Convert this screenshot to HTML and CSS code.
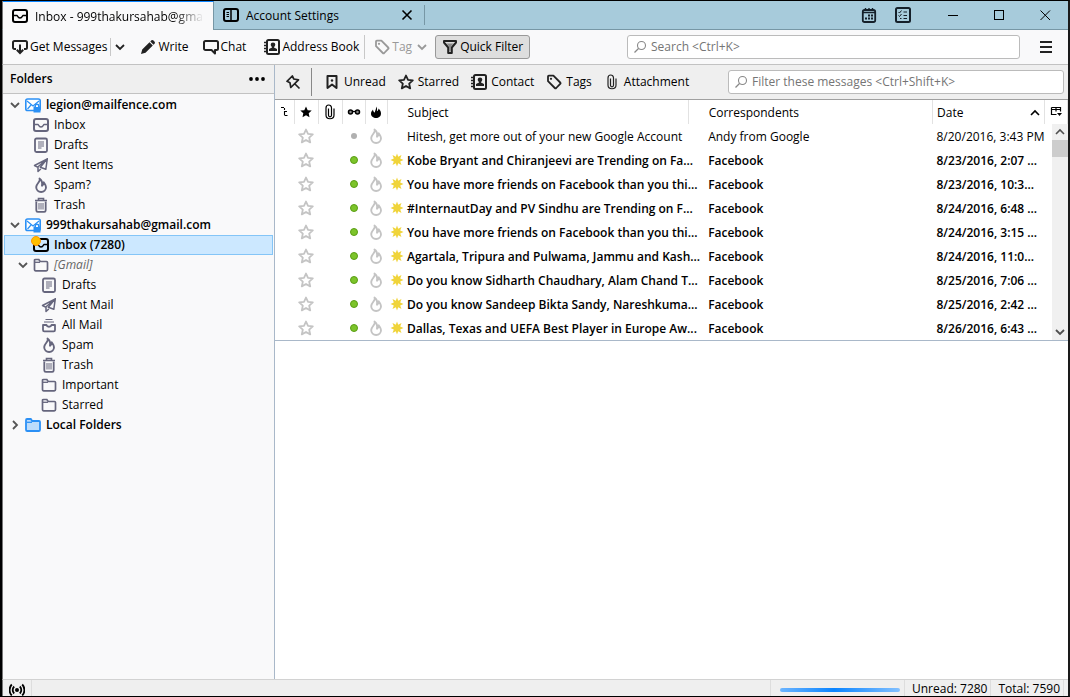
FILE: index.html
```html
<!DOCTYPE html>
<html lang="en">
  <head>
    <meta charset="UTF-8" />
    <meta name="viewport" content="width=device-width, initial-scale=1.0" />
    <title>Inbox - 999thakursahab@gmail.com</title>
    <link rel="stylesheet" href="styles.css">
  </head>
  <body>
    <!-- icon sprite -->
    <svg class="sprite" aria-hidden="true">
      <symbol id="i-inbox" viewBox="0 0 16 16"><rect x="1" y="2" width="14" height="12" rx="2" fill="none" stroke="currentColor" stroke-width="2"/><path d="M2 7.500h3c.6 0 .6 2.500 3 2.500s2.400-2.500 3-2.500h3" fill="none" stroke="currentColor" stroke-width="1.300"/></symbol>
      <symbol id="i-page" viewBox="0 0 16 16"><rect x="2" y="1.500" width="12" height="13.500" rx="1.500" fill="none" stroke="currentColor" stroke-width="1.800"/><path d="M5 5h6M5 7h6M5 9h6M5 11h3.500" stroke="currentColor"/></symbol>
      <symbol id="i-sent" viewBox="0 0 16 16"><path d="M14.300 1.800L1.500 8.500l3 1.700L14.300 1.800l-1.500 10.500-5.500-2zM5 10v4.500l2.800-2.500" fill="none" stroke="currentColor" stroke-width="1.500" stroke-linejoin="round"/></symbol>
      <symbol id="i-flame" viewBox="0 0 16 16"><path d="M6.500 1.500c2 2.500-3.300 5-3.300 8.500 0 3 2.200 5 4.900 5 2.800 0 4.900-2 4.900-4.700 0-2.300-1.500-3.300-2.300-5-.2 1.800-.6 2.700-1.700 3.500C9.500 5.500 9 3 6.500 1.500z" fill="none" stroke="currentColor" stroke-width="1.900" stroke-linejoin="round"/></symbol>
      <symbol id="i-flame-solid" viewBox="0 0 16 16"><path d="M8 2.500c1.200 1.500 1.300 3 .8 4.800.9-.3 1.500-1.300 1.900-2.800 1.300 1.500 2.300 3 2.300 5 0 2.800-2.200 4.500-4.900 4.500S3 12.300 3 9.700c0-2 1.200-3 2-4.200.2 1.800.8 2.800 1.800 3C7 6.500 8.500 5 8 2.500z" fill="currentColor"/></symbol>
      <symbol id="i-trash" viewBox="0 0 16 16"><path d="M3.300 4.500v8.700c0 1 .6 1.600 1.500 1.600h6.400c.9 0 1.500-.6 1.500-1.600V4.500" fill="none" stroke="currentColor" stroke-width="1.800"/><path d="M2 3.500h12M5.500 3V1.500h5V3" fill="none" stroke="currentColor" stroke-width="1.600"/><path d="M6 6v6.500M8 6v6.500M10 6v6.500" stroke="currentColor"/></symbol>
      <symbol id="i-archive" viewBox="0 0 16 16"><path d="M4.500 2.500h7M3 5h10" stroke="currentColor" stroke-width="1.200"/><path d="M2 8v5c0 .8.500 1.300 1.300 1.300h9.400c.8 0 1.300-.5 1.300-1.300V8h-3.500c-.5 2.300-4.500 2.300-5 0z" fill="none" stroke="currentColor" stroke-width="1.800" stroke-linejoin="round"/></symbol>
      <symbol id="i-folder" viewBox="0 0 16 16"><path d="M1.500 12.500v-9c0-.7.400-1 1-1h3.300l1.400 2h6.300c.7 0 1 .4 1 1v7c0 .8-.4 1.300-1.200 1.300H2.700c-.8 0-1.200-.5-1.200-1.300z" fill="none" stroke="currentColor" stroke-width="1.700"/><path d="M2 5.300h5" stroke="currentColor" stroke-width="1.300"/></symbol>
      <symbol id="i-folder-local" viewBox="0 0 16 16"><path d="M1 12.700v-9.500c0-.7.400-1.200 1-1.200h3.800l1.400 2H14c.6 0 1 .4 1 1v7.700c0 .8-.4 1.300-1.200 1.300H2.200c-.8 0-1.200-.5-1.200-1.300z" fill="#bddcfb" stroke="#2b90f5" stroke-width="1.800"/><path d="M2 5.300h5" stroke="#2b90f5" stroke-width="1.300"/></symbol>
      <symbol id="i-account" viewBox="0 0 16 16"><rect x=".8" y="2" width="14.400" height="11.500" rx="1.800" fill="#fff" stroke="#2b90f5" stroke-width="1.600"/><path d="M2 4l6 5 6-5M2.500 12l3.500-4" fill="none" stroke="#2b90f5" stroke-width="1.200"/><rect x="8.500" y="9.500" width="7" height="6" fill="#2b90f5"/><path d="M10.300 10V8.700c0-2 3.400-2 3.400 0V10" fill="#fff" stroke="#2b90f5" stroke-width="1.400"/></symbol>
      <symbol id="i-settings-tab" viewBox="0 0 16 16"><rect x="1" y="2" width="14" height="12" rx="2" fill="none" stroke="currentColor" stroke-width="2"/><path d="M8 2v12" stroke="currentColor" stroke-width="1.500"/><path d="M3.500 5.500H6M3.500 7.500H6M3.500 9.500H6" stroke="currentColor"/></symbol>
      <symbol id="i-close" viewBox="0 0 16 16"><path d="M3.500 3.500l9 9M12.500 3.500l-9 9" stroke="currentColor" stroke-width="1.600"/></symbol>
      <symbol id="i-calendar" viewBox="0 0 16 16"><rect x="1.800" y="3" width="12.400" height="12" rx="1.800" fill="none" stroke="currentColor" stroke-width="1.800"/><path d="M2 5.500h12" stroke="currentColor" stroke-width="1.500"/><path d="M4.500 1v3M8 1v3M11.500 1v3" stroke="currentColor" stroke-width="1.400"/><path d="M7 8.500h5M4 11.500h8" stroke="currentColor" stroke-width="2" stroke-dasharray="2 1"/></symbol>
      <symbol id="i-tasks" viewBox="0 0 16 16"><rect x="1" y="1" width="14" height="14" rx="1.500" fill="none" stroke="currentColor" stroke-width="2"/><path d="M3.500 5l1 1L6.500 3.500M3.500 8.500l1 1 2-2.500M8.500 5H12M8.500 8.500H12M8.500 11.500H12M5 11.500h1.500" fill="none" stroke="currentColor"/></symbol>
      <symbol id="i-minimize" viewBox="0 0 16 16"><path d="M3 8.500h10" stroke="currentColor"/></symbol>
      <symbol id="i-maximize" viewBox="0 0 16 16"><rect x="3.500" y="3.500" width="9" height="9" fill="none" stroke="currentColor"/></symbol>
      <symbol id="i-exit" viewBox="0 0 16 16"><path d="M3.500 3.500l9.500 9.500M13 3.500L3.500 13" stroke="currentColor"/></symbol>
      <symbol id="i-get" viewBox="0 0 16 16"><path d="M4 10H2.500C1.600 10 1 9.400 1 8.500v-5C1 2.600 1.600 2 2.500 2h11c.9 0 1.500.6 1.500 1.500v5c0 .9-.6 1.500-1.500 1.500H12" fill="none" stroke="currentColor" stroke-width="2"/><path d="M8 5.500v8M4.800 10.800L8 14l3.200-3.200" fill="none" stroke="currentColor" stroke-width="2"/></symbol>
      <symbol id="i-down" viewBox="0 0 16 16"><path d="M4 6l4 4 4-4" fill="none" stroke="currentColor" stroke-width="1.800"/></symbol>
      <symbol id="i-write" viewBox="0 0 16 16"><path d="M1 15l1.200-4.500 7.300-7.200 3.300 3.300-7.300 7.200zM10.300 2.500l1-1c.8-.7 1.600-.5 2.200.1l.9.900c.7.700.7 1.500.1 2.200l-1 1z" fill="currentColor"/></symbol>
      <symbol id="i-chat" viewBox="0 0 16 16"><path d="M2.500 2h11c.8 0 1.500.6 1.500 1.500v6c0 .9-.7 1.500-1.500 1.500H12v3.500L8.500 11h-6C1.600 11 1 10.400 1 9.500v-6C1 2.600 1.600 2 2.500 2z" fill="none" stroke="currentColor" stroke-width="2" stroke-linejoin="round"/></symbol>
      <symbol id="i-book" viewBox="0 0 16 16"><rect x="3" y="1" width="12" height="14" rx="1.500" fill="none" stroke="currentColor" stroke-width="2"/><path d="M0 3.500h3M0 6.500h3M0 9.500h3M0 12.500h3" stroke="currentColor" stroke-width="1.500"/><circle cx="9" cy="5.800" r="2.300" fill="currentColor"/><path d="M8 7h2v1.500l3 1.500v2H5v-2l3-1.500z" fill="currentColor"/></symbol>
      <symbol id="i-tag" viewBox="0 0 16 16"><path d="M2 2.500c0-.5.300-.8.800-.8h4.600l6.800 6.800c.4.400.4.900 0 1.300l-4 4.200c-.4.400-1 .4-1.400 0L2 7.200z" fill="none" stroke="currentColor" stroke-width="1.800" stroke-linejoin="round"/><circle cx="5" cy="4.800" r="1.100" fill="currentColor"/></symbol>
      <symbol id="i-filter" viewBox="0 0 16 16"><path d="M2 2h12v1.500L9.800 8.500v5.500H6.200V8.500L2 3.500z" fill="none" stroke="currentColor" stroke-width="2" stroke-linejoin="round"/><path d="M4.500 4.500h7L9 7.500v5H7v-5z" fill="#8a8a8a"/></symbol>
      <symbol id="i-search" viewBox="0 0 16 16"><circle cx="9.500" cy="6.500" r="4" fill="none" stroke="currentColor" stroke-width="1.100"/><path d="M6.500 9.500L2.500 13.500" stroke="currentColor" stroke-width="1.300"/></symbol>
      <symbol id="i-menu" viewBox="0 0 16 16"><path d="M2 3h12M2 8h12M2 13h12" stroke="currentColor" stroke-width="2"/></symbol>
      <symbol id="i-dots" viewBox="0 0 16 16"><circle cx="2" cy="8" r="1.900" fill="currentColor"/><circle cx="8" cy="8" r="1.900" fill="currentColor"/><circle cx="14" cy="8" r="1.900" fill="currentColor"/></symbol>
      <symbol id="i-pin" viewBox="0 0 16 16"><path d="M7.300 2L2 7.300l3 1.500.8 4.700 7.700-7.700-4.700-.8zM10 10l4.500 4.500" fill="none" stroke="currentColor" stroke-width="1.700" stroke-linejoin="round"/></symbol>
      <symbol id="i-unread" viewBox="0 0 16 16"><path d="M3.500 2h9v12L8 10.500 3.500 14z" fill="none" stroke="currentColor" stroke-width="2" stroke-linejoin="round"/><circle cx="8" cy="6.500" r="1.200" fill="currentColor"/></symbol>
      <symbol id="i-star" viewBox="0 0 16 16"><path d="M8 1.500l2 4.400 4.800.5-3.600 3.300 1 4.700L8 12l-4.200 2.400 1-4.700L1.200 6.400 6 5.900z" fill="none" stroke="currentColor" stroke-width="1.800" stroke-linejoin="round"/></symbol>
      <symbol id="i-star-solid" viewBox="0 0 16 16"><path d="M8 2.500l1.700 3.700 4 .4-3 2.700.8 4L8 11.300l-3.500 2 .8-4-3-2.700 4-.4z" fill="currentColor"/></symbol>
      <symbol id="i-clip" viewBox="0 0 16 16"><path d="M6.500 4.500v6.800c0 2 3 2 3 0V4c0-4-5.500-4-5.500 0v7c0 5 8 5 8 0V4.500" fill="none" stroke="currentColor" stroke-width="1.200"/></symbol>
      <symbol id="i-glasses" viewBox="0 0 16 16"><circle cx="4.500" cy="8" r="2" fill="#888" stroke="currentColor" stroke-width="1.500"/><circle cx="11.500" cy="8" r="2" fill="#888" stroke="currentColor" stroke-width="1.500"/><path d="M6 7.500h4" stroke="currentColor" stroke-width="1.300"/></symbol>
      <symbol id="i-thread" viewBox="0 0 16 16"><path d="M5 3.500h3M8.500 4v2M8.500 7.500h2.500M8.500 7v4M8.500 11.500h3" fill="none" stroke="currentColor" stroke-width="1.100"/></symbol>
      <symbol id="i-up" viewBox="0 0 16 16"><path d="M4 10l4-4 4 4" fill="none" stroke="currentColor" stroke-width="1.600"/></symbol>
      <symbol id="i-picker" viewBox="0 0 16 16"><path d="M3.500 3.500h9v4M3.500 3.500v7h5M3.500 5.500h9M8 3.500v4" fill="none" stroke="currentColor" stroke-width="1.200"/><path d="M9 9h5l-2.500 3z" fill="currentColor"/></symbol>
      <symbol id="i-new" viewBox="0 0 16 16"><path d="M8 1.500l1.200 3.300 3.300-1.800-1.300 3.500 3.300 1.500-3.300 1.500 1.300 3.500-3.300-1.800L8 14.500l-1.200-3.300L3.500 13l1.300-3.500L1.500 8l3.300-1.500L3.500 3l3.300 1.800z" fill="#f0d43a"/></symbol>
      <symbol id="i-online" viewBox="0 0 16 16"><circle cx="8" cy="8" r="2" fill="currentColor"/><path d="M5.200 4.500c-2 2-2 5 0 7M10.800 4.500c2 2 2 5 0 7M2.800 2.500c-3 3-3 8 0 11M13.200 2.500c3 3 3 8 0 11" fill="none" stroke="currentColor" stroke-width="1.800"/></symbol>
    </svg>

    <header class="titlebar">
      <div class="tab active">
        <svg class="icon"><use href="#i-inbox"/></svg>
        <span class="tab-title">Inbox - 999thakursahab@gmail.com</span>
      </div>
      <div class="tab">
        <svg class="icon"><use href="#i-settings-tab"/></svg>
        <span class="tab-title">Account Settings</span>
        <button type="button" class="tab-close" aria-label="Close tab"><svg class="icon"><use href="#i-close"/></svg></button>
      </div>
      <div class="window-tools">
        <button type="button" aria-label="Calendar"><svg class="icon"><use href="#i-calendar"/></svg></button>
        <button type="button" aria-label="Tasks"><svg class="icon"><use href="#i-tasks"/></svg></button>
      </div>
      <div class="window-buttons">
        <button type="button" aria-label="Minimize"><svg class="icon"><use href="#i-minimize"/></svg></button>
        <button type="button" aria-label="Maximize"><svg class="icon"><use href="#i-maximize"/></svg></button>
        <button type="button" aria-label="Close"><svg class="icon"><use href="#i-exit"/></svg></button>
      </div>
    </header>

    <nav class="toolbar">
      <button type="button" class="tool get"><svg class="icon"><use href="#i-get"/></svg>Get Messages</button>
      <button type="button" class="tool-arrow" aria-label="Get messages menu"><svg class="icon"><use href="#i-down"/></svg></button>
      <button type="button" class="tool write"><svg class="icon"><use href="#i-write"/></svg>Write</button>
      <button type="button" class="tool chat"><svg class="icon"><use href="#i-chat"/></svg>Chat</button>
      <button type="button" class="tool book"><svg class="icon"><use href="#i-book"/></svg>Address Book</button>
      <button type="button" class="tool tag" disabled><svg class="icon"><use href="#i-tag"/></svg>Tag<svg class="icon"><use href="#i-down"/></svg></button>
      <button type="button" class="tool quick"><svg class="icon"><use href="#i-filter"/></svg>Quick Filter</button>
      <label class="search main-search">
        <svg class="icon"><use href="#i-search"/></svg>
        <input type="text" name="search" placeholder="Search &lt;Ctrl+K&gt;" aria-label="Search" />
      </label>
      <button type="button" class="menu" aria-label="Menu"><svg class="icon"><use href="#i-menu"/></svg></button>
    </nav>

    <div class="content">
      <aside class="folders">
        <div class="folders-head">
          <h2>Folders</h2>
          <button type="button" aria-label="Folder options"><svg class="icon"><use href="#i-dots"/></svg></button>
        </div>
        <ul class="tree">
          <li>
            <a href="#" class="account"><svg class="twisty"><use href="#i-down"/></svg><svg class="icon"><use href="#i-account"/></svg>legion@mailfence.com</a>
            <ul>
              <li><a href="#"><svg class="icon"><use href="#i-inbox"/></svg>Inbox</a></li>
              <li><a href="#"><svg class="icon"><use href="#i-page"/></svg>Drafts</a></li>
              <li><a href="#"><svg class="icon"><use href="#i-sent"/></svg>Sent Items</a></li>
              <li><a href="#"><svg class="icon"><use href="#i-flame"/></svg>Spam?</a></li>
              <li><a href="#"><svg class="icon"><use href="#i-trash"/></svg>Trash</a></li>
            </ul>
          </li>
          <li>
            <a href="#" class="account"><svg class="twisty"><use href="#i-down"/></svg><svg class="icon"><use href="#i-account"/></svg>999thakursahab@gmail.com</a>
            <ul>
              <li><a href="#" class="selected"><span class="badge-icon"><svg class="icon"><use href="#i-inbox"/></svg></span>Inbox (7280)</a></li>
              <li>
                <a href="#" class="virtual"><svg class="twisty"><use href="#i-down"/></svg><svg class="icon"><use href="#i-folder"/></svg>[Gmail]</a>
                <ul>
                  <li><a href="#"><svg class="icon"><use href="#i-page"/></svg>Drafts</a></li>
                  <li><a href="#"><svg class="icon"><use href="#i-sent"/></svg>Sent Mail</a></li>
                  <li><a href="#"><svg class="icon"><use href="#i-archive"/></svg>All Mail</a></li>
                  <li><a href="#"><svg class="icon"><use href="#i-flame"/></svg>Spam</a></li>
                  <li><a href="#"><svg class="icon"><use href="#i-trash"/></svg>Trash</a></li>
                  <li><a href="#"><svg class="icon"><use href="#i-folder"/></svg>Important</a></li>
                  <li><a href="#"><svg class="icon"><use href="#i-folder"/></svg>Starred</a></li>
                </ul>
              </li>
            </ul>
          </li>
          <li><a href="#" class="account"><svg class="twisty closed"><use href="#i-down"/></svg><svg class="icon"><use href="#i-folder-local"/></svg>Local Folders</a></li>
        </ul>
      </aside>

      <main class="mail">
        <div class="filterbar">
          <button type="button" class="pin" aria-label="Keep filters"><svg class="icon"><use href="#i-pin"/></svg></button>
          <button type="button"><svg class="icon"><use href="#i-unread"/></svg>Unread</button>
          <button type="button"><svg class="icon"><use href="#i-star"/></svg>Starred</button>
          <button type="button"><svg class="icon"><use href="#i-book"/></svg>Contact</button>
          <button type="button"><svg class="icon"><use href="#i-tag"/></svg>Tags</button>
          <button type="button"><svg class="icon"><use href="#i-clip"/></svg>Attachment</button>
          <label class="search filter-search">
            <svg class="icon"><use href="#i-search"/></svg>
            <input type="text" name="filter" placeholder="Filter these messages &lt;Ctrl+Shift+K&gt;" aria-label="Filter these messages" />
          </label>
        </div>

        <div class="threads">
          <table>
            <colgroup>
              <col class="c-thread" /><col class="c-star" /><col class="c-clip" /><col class="c-read" /><col class="c-junk" />
              <col class="c-subject" /><col class="c-from" /><col class="c-date" /><col class="c-picker" />
            </colgroup>
            <thead>
              <tr>
                <th aria-label="Thread"><svg class="icon"><use href="#i-thread"/></svg></th>
                <th aria-label="Starred"><svg class="icon"><use href="#i-star-solid"/></svg></th>
                <th aria-label="Attachments"><svg class="icon"><use href="#i-clip"/></svg></th>
                <th aria-label="Read"><svg class="icon"><use href="#i-glasses"/></svg></th>
                <th aria-label="Junk"><svg class="icon"><use href="#i-flame-solid"/></svg></th>
                <th class="subject">Subject</th>
                <th class="from">Correspondents</th>
                <th class="date"><span class="sorted">Date<svg class="icon"><use href="#i-up"/></svg></span></th>
                <th aria-label="Columns"><svg class="icon"><use href="#i-picker"/></svg></th>
              </tr>
            </thead>
            <tbody>
              <tr>
                <td></td><td><svg class="icon"><use href="#i-star"/></svg></td><td></td><td><i class="dot"></i></td><td><svg class="icon"><use href="#i-flame"/></svg></td>
                <td class="subject">Hitesh, get more out of your new Google Account</td><td class="from">Andy from Google</td><td class="date">8/20/2016, 3:43 PM</td><td></td>
              </tr>
              <tr class="unread">
                <td></td><td><svg class="icon"><use href="#i-star"/></svg></td><td></td><td><i class="dot"></i></td><td><svg class="icon"><use href="#i-flame"/></svg></td>
                <td class="subject"><svg class="icon new"><use href="#i-new"/></svg>Kobe Bryant and Chiranjeevi are Trending on Fa...</td><td class="from">Facebook</td><td class="date">8/23/2016, 2:07 ...</td><td></td>
              </tr>
              <tr class="unread">
                <td></td><td><svg class="icon"><use href="#i-star"/></svg></td><td></td><td><i class="dot"></i></td><td><svg class="icon"><use href="#i-flame"/></svg></td>
                <td class="subject"><svg class="icon new"><use href="#i-new"/></svg>You have more friends on Facebook than you thi...</td><td class="from">Facebook</td><td class="date">8/23/2016, 10:3...</td><td></td>
              </tr>
              <tr class="unread">
                <td></td><td><svg class="icon"><use href="#i-star"/></svg></td><td></td><td><i class="dot"></i></td><td><svg class="icon"><use href="#i-flame"/></svg></td>
                <td class="subject"><svg class="icon new"><use href="#i-new"/></svg>#InternautDay and PV Sindhu are Trending on F...</td><td class="from">Facebook</td><td class="date">8/24/2016, 6:48 ...</td><td></td>
              </tr>
              <tr class="unread">
                <td></td><td><svg class="icon"><use href="#i-star"/></svg></td><td></td><td><i class="dot"></i></td><td><svg class="icon"><use href="#i-flame"/></svg></td>
                <td class="subject"><svg class="icon new"><use href="#i-new"/></svg>You have more friends on Facebook than you thi...</td><td class="from">Facebook</td><td class="date">8/24/2016, 3:15 ...</td><td></td>
              </tr>
              <tr class="unread">
                <td></td><td><svg class="icon"><use href="#i-star"/></svg></td><td></td><td><i class="dot"></i></td><td><svg class="icon"><use href="#i-flame"/></svg></td>
                <td class="subject"><svg class="icon new"><use href="#i-new"/></svg>Agartala, Tripura and Pulwama, Jammu and Kash...</td><td class="from">Facebook</td><td class="date">8/24/2016, 11:0...</td><td></td>
              </tr>
              <tr class="unread">
                <td></td><td><svg class="icon"><use href="#i-star"/></svg></td><td></td><td><i class="dot"></i></td><td><svg class="icon"><use href="#i-flame"/></svg></td>
                <td class="subject"><svg class="icon new"><use href="#i-new"/></svg>Do you know Sidharth Chaudhary, Alam Chand T...</td><td class="from">Facebook</td><td class="date">8/25/2016, 7:06 ...</td><td></td>
              </tr>
              <tr class="unread">
                <td></td><td><svg class="icon"><use href="#i-star"/></svg></td><td></td><td><i class="dot"></i></td><td><svg class="icon"><use href="#i-flame"/></svg></td>
                <td class="subject"><svg class="icon new"><use href="#i-new"/></svg>Do you know Sandeep Bikta Sandy, Nareshkuma...</td><td class="from">Facebook</td><td class="date">8/25/2016, 2:42 ...</td><td></td>
              </tr>
              <tr class="unread">
                <td></td><td><svg class="icon"><use href="#i-star"/></svg></td><td></td><td><i class="dot"></i></td><td><svg class="icon"><use href="#i-flame"/></svg></td>
                <td class="subject"><svg class="icon new"><use href="#i-new"/></svg>Dallas, Texas and UEFA Best Player in Europe Aw...</td><td class="from">Facebook</td><td class="date">8/26/2016, 6:43 ...</td><td></td>
              </tr>
            </tbody>
          </table>
          <div class="scrollbar">
            <svg class="icon"><use href="#i-up"/></svg>
            <span class="thumb"></span>
            <svg class="icon"><use href="#i-down"/></svg>
          </div>
        </div>
        <section class="preview"></section>
      </main>
    </div>

    <footer class="statusbar">
      <span class="online"><svg class="icon"><use href="#i-online"/></svg></span>
      <span class="progress"><i></i></span>
      <span class="count">Unread: 7280</span>
      <span class="count">Total: 7590</span>
    </footer>
  </body>
</html>
```
FILE: styles.css
```css
* {
  padding: 0;
  margin: 0;
  box-sizing: border-box;
}
body {
  display: flex;
  flex-direction: column;
  height: 100vh;
  border: 1px solid #000;
  border-left: 2px solid #000;
  border-right: 2px solid #1a1a1a;
  background: #f9f9fa;
  color: #000;
  font: 12px/20px "Open Sans", "Noto Sans", sans-serif;
  overflow: hidden;
}
ul {
  list-style: none;
}
a {
  color: inherit;
  text-decoration: none;
}
button {
  display: flex;
  align-items: center;
  border: 0;
  background: none;
  font: inherit;
  color: inherit;
  white-space: nowrap;
}
.sprite {
  display: none;
}
.icon {
  width: 16px;
  height: 16px;
  flex: none;
  display: block;
}

/* title bar */
.titlebar {
  display: flex;
  align-items: center;
  height: 29px;
  flex: none;
  background: #a7cbdb;
  border-bottom: 1px solid #7797a5;
  border-left: 1px solid #777;
}
.tab {
  display: flex;
  align-items: center;
  gap: 7px;
  width: 211px;
  height: 20px;
  padding: 0 9px;
  border-right: 1px solid #7797a5;
}
.tab.active {
  height: 29px;
  margin-bottom: -1px;
  background: #f9f9fa;
  border-top: 1px solid #0a84ff;
}
.tab-title {
  flex: 1;
  padding-top: 2px;
  overflow: hidden;
  white-space: nowrap;
}
.tab.active .tab-title {
  mask-image: linear-gradient(to left, transparent, #000 30px);
}
.window-tools {
  display: flex;
  gap: 18px;
  margin-left: auto;
  color: #15202a;
}
.window-buttons {
  display: flex;
  gap: 30px;
  margin: 0 15px 0 34px;
}

/* main toolbar */
.toolbar {
  display: flex;
  align-items: center;
  height: 35px;
  flex: none;
  padding: 0 14px 0 9px;
  border-bottom: 1px solid #c2c2c2;
  border-left: 1px solid #777;
}
.toolbar .icon {
  color: #222;
}
.tool {
  gap: 2px;
  margin-right: 14px;
}
.tool.get {
  margin-right: 3px;
}
.tool-arrow {
  height: 18px;
  padding-left: 1px;
  margin-right: 12px;
  border-left: 1px solid #c8c8c8;
}
.tool.chat {
  margin-right: 18px;
}
.tool.book {
  margin-right: 5px;
}
.tool.tag {
  height: 24px;
  padding-left: 9px;
  margin-right: 5px;
  border-left: 1px solid #c8c8c8;
  color: #999;
}
.tool.tag .icon {
  color: #999;
}
.tool.quick {
  height: 24px;
  padding: 0 6px;
  border: 1px solid #999;
  border-radius: 3px;
  background: #dedede;
}
.search {
  display: flex;
  align-items: center;
  gap: 3px;
  height: 24px;
  padding: 0 4px;
  border: 1px solid #bbb;
  border-radius: 3px;
  background: #fff;
}
.search .icon {
  color: #888;
}
.search input {
  flex: 1;
  min-width: 0;
  border: 0;
  outline: 0;
  background: none;
  font: inherit;
}
.search input::placeholder {
  color: #757575;
}
.main-search {
  width: 38%;
  max-width: 393px;
  margin-left: auto;
}
.menu {
  margin-left: 18px;
}

/* folder pane */
.content {
  display: flex;
  flex: 1;
  min-height: 0;
}
.folders {
  width: 273px;
  flex: none;
  border-left: 1px solid #777;
  border-right: 1px solid #a9b8c9;
}
.folders-head {
  display: flex;
  align-items: center;
  justify-content: space-between;
  height: 29px;
  padding: 0 9px 0 7px;
  background: #efefef;
  border-bottom: 1px solid #c2c2c2;
}
.folders-head h2 {
  font-size: 12px;
  font-weight: 600;
}
.tree {
  padding: 1px;
}
.tree a {
  display: flex;
  align-items: center;
  gap: 5px;
  height: 20px;
  padding-left: 28px;
  border: 1px solid transparent;
}
.tree .icon {
  color: #66667d;
}
.tree ul ul a {
  padding-left: 36px;
}
.tree .twisty {
  width: 16px;
  height: 16px;
  color: #555;
}
.tree .twisty.closed {
  transform: rotate(-90deg);
}
.tree a.account {
  gap: 2px;
  padding-left: 2px;
  font-weight: 600;
}
.tree .account .icon {
  margin-right: 3px;
}
.tree a.virtual {
  gap: 2px;
  padding-left: 10px;
  font-style: italic;
  color: #666;
}
.tree .virtual .icon {
  margin-right: 3px;
}
.tree a.selected {
  border-color: #84c5f7;
  background: #cce8ff;
  font-weight: 600;
}
.tree .selected .icon {
  color: #000;
}
.badge-icon {
  position: relative;
}
.badge-icon::before {
  content: "";
  position: absolute;
  top: -1px;
  left: -2px;
  width: 8px;
  height: 8px;
  border: 1px solid #ff9400;
  border-radius: 50%;
  background: #ffbf00;
}

/* quick filter bar */
.mail {
  display: flex;
  flex-direction: column;
  flex: 1;
  min-width: 0;
  background: #fff;
}
.filterbar {
  display: flex;
  align-items: center;
  gap: 12px;
  height: 35px;
  flex: none;
  padding-right: 4px;
  background: #efefef;
  border-bottom: 1px solid #a0a0a0;
}
.filterbar button {
  gap: 4px;
}
.filterbar .icon {
  color: #222;
}
.filterbar .pin {
  height: 28px;
  padding: 0 10px;
  border-right: 1px solid #888;
}
.filterbar .search .icon {
  color: #888;
}
.filter-search {
  flex: 1;
  max-width: 336px;
  margin-left: auto;
}

/* message list */
.threads {
  position: relative;
  flex: none;
  border-bottom: 1px solid #a9b8c9;
}
table {
  width: 100%;
  table-layout: fixed;
  border-collapse: collapse;
}
.c-thread {
  width: 19px;
}
.c-star,
.c-clip {
  width: 24px;
}
.c-read,
.c-picker {
  width: 23px;
}
.c-junk {
  width: 22px;
}
.c-subject {
  width: 38%;
}
.c-date {
  width: 112px;
}
th,
td {
  height: 24px;
  white-space: nowrap;
  text-align: left;
  font-weight: normal;
}
th {
  border-right: 1px solid #e2e2e2;
}
th .icon,
td .icon {
  margin: 0 auto;
}
td .icon {
  color: #c4c4c4;
}
.subject,
.from {
  padding: 2px 0 0 20px;
}
.date {
  padding: 2px 0 0 4px;
}
.subject .new {
  float: left;
  margin: 1px 2px 0 -18px;
}
.sorted {
  display: flex;
  align-items: center;
  justify-content: space-between;
}
.sorted .icon {
  margin: 0 1px 0 0;
}
.unread td {
  font-weight: 600;
}
.dot {
  display: block;
  width: 6px;
  height: 6px;
  margin: 0 auto;
  border-radius: 50%;
  background: #b0b0b0;
}
.unread .dot {
  width: 8px;
  height: 8px;
  border: 1px solid #5a9e14;
  background: #7cc42a;
}
.scrollbar {
  position: absolute;
  top: 24px;
  right: 0;
  bottom: 0;
  display: flex;
  flex-direction: column;
  width: 16px;
  background: #f0f0f0;
  color: #505050;
}
.thumb {
  height: 17px;
  margin-bottom: auto;
  background: #cdcdcd;
}

/* status bar */
.statusbar {
  display: flex;
  height: 17px;
  flex: none;
  padding-right: 4px;
  background: #efefef;
  border-top: 1px solid #d2d2d2;
  border-left: 1px solid #777;
  line-height: 18px;
  overflow: hidden;
}
.statusbar .online {
  width: 29px;
  padding: 2px 6px;
  border-right: 1px solid #ddd;
}
.progress {
  width: 135px;
  margin-left: auto;
  padding: 8px 4px 0 9px;
  border-left: 1px solid #ddd;
  border-right: 1px solid #ddd;
}
.progress i {
  display: block;
  height: 4px;
  border-radius: 2px;
  background: linear-gradient(to right, #6db5ff, #0a84ff 45%, #84c1ff);
}
.count {
  padding: 0 3px 0 7px;
  border-right: 1px solid #ddd;
}
```
